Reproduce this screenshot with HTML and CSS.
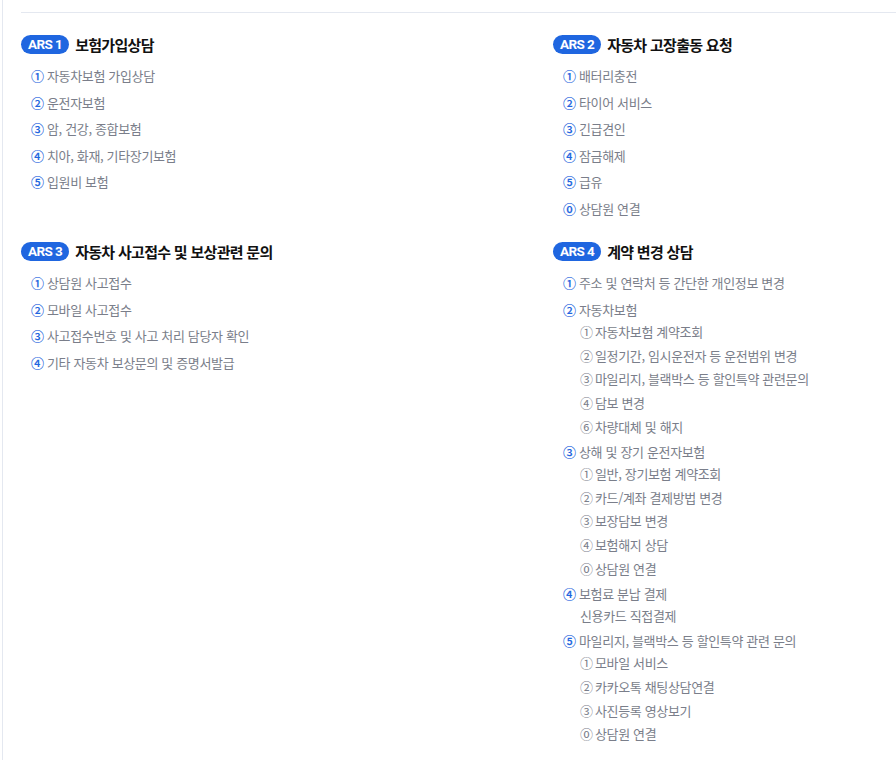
FILE: index.html
```html
<!DOCTYPE html>
<html lang="ko">
<head>
<meta charset="utf-8">
<title>ARS</title>
<link rel="stylesheet" href="styles.css">
</head>
<body>
<main class="page">
  <div class="grid">
    <section class="block">
      <h3 class="title"><span class="badge">ARS 1</span>보험가입상담</h3>
      <ul class="list">
        <li class="item"><span class="num">①</span>자동차보험 가입상담</li>
        <li class="item"><span class="num">②</span>운전자보험</li>
        <li class="item"><span class="num">③</span>암, 건강, 종합보험</li>
        <li class="item"><span class="num">④</span>치아, 화재, 기타장기보험</li>
        <li class="item"><span class="num">⑤</span>입원비 보험</li>
      </ul>
    </section>
    <section class="block">
      <h3 class="title"><span class="badge">ARS 2</span>자동차 고장출동 요청</h3>
      <ul class="list">
        <li class="item"><span class="num">①</span>배터리충전</li>
        <li class="item"><span class="num">②</span>타이어 서비스</li>
        <li class="item"><span class="num">③</span>긴급견인</li>
        <li class="item"><span class="num">④</span>잠금해제</li>
        <li class="item"><span class="num">⑤</span>급유</li>
        <li class="item"><span class="num">⓪</span>상담원 연결</li>
      </ul>
    </section>
    <section class="block">
      <h3 class="title"><span class="badge">ARS 3</span>자동차 사고접수 및 보상관련 문의</h3>
      <ul class="list">
        <li class="item"><span class="num">①</span>상담원 사고접수</li>
        <li class="item"><span class="num">②</span>모바일 사고접수</li>
        <li class="item"><span class="num">③</span>사고접수번호 및 사고 처리 담당자 확인</li>
        <li class="item"><span class="num">④</span>기타 자동차 보상문의 및 증명서발급</li>
      </ul>
    </section>
    <section class="block">
      <h3 class="title"><span class="badge">ARS 4</span>계약 변경 상담</h3>
      <ul class="list">
        <li class="item"><span class="num">①</span>주소 및 연락처 등 간단한 개인정보 변경</li>
        <li class="item"><span class="num">②</span>자동차보험
          <ul class="sub">
            <li class="sub-item"><span class="sub-num">①</span>자동차보험 계약조회</li>
            <li class="sub-item"><span class="sub-num">②</span>일정기간, 임시운전자 등 운전범위 변경</li>
            <li class="sub-item"><span class="sub-num">③</span>마일리지, 블랙박스 등 할인특약 관련문의</li>
            <li class="sub-item"><span class="sub-num">④</span>담보 변경</li>
            <li class="sub-item"><span class="sub-num">⑥</span>차량대체 및 해지</li>
          </ul>
        </li>
        <li class="item"><span class="num">③</span>상해 및 장기 운전자보험
          <ul class="sub">
            <li class="sub-item"><span class="sub-num">①</span>일반, 장기보험 계약조회</li>
            <li class="sub-item"><span class="sub-num">②</span>카드/계좌 결제방법 변경</li>
            <li class="sub-item"><span class="sub-num">③</span>보장담보 변경</li>
            <li class="sub-item"><span class="sub-num">④</span>보험해지 상담</li>
            <li class="sub-item"><span class="sub-num">⓪</span>상담원 연결</li>
          </ul>
        </li>
        <li class="item"><span class="num">④</span>보험료 분납 결제
          <ul class="sub">
            <li class="sub-item">신용카드 직접결제</li>
          </ul>
        </li>
        <li class="item"><span class="num">⑤</span>마일리지, 블랙박스 등 할인특약 관련 문의
          <ul class="sub">
            <li class="sub-item"><span class="sub-num">①</span>모바일 서비스</li>
            <li class="sub-item"><span class="sub-num">②</span>카카오톡 채팅상담연결</li>
            <li class="sub-item"><span class="sub-num">③</span>사진등록 영상보기</li>
            <li class="sub-item"><span class="sub-num">⓪</span>상담원 연결</li>
          </ul>
        </li>
      </ul>
    </section>
  </div>
</main>
</body>
</html>
```
FILE: styles.css
```css
html, body {
  margin: 0;
  padding: 0;
  background: #fff;
}
body {
  height: 760px;
  overflow: hidden;
  font-family: "Noto Sans CJK KR", "Noto Sans", sans-serif;
}
.page {
  margin-left: 2px;
  border-left: 1px solid #e4e8f0;
  padding: 12px 0 0 18px;
  height: 748px;
}
.grid {
  border-top: 1px solid #e4e8f0;
  padding-top: 21px;
  display: grid;
  grid-template-columns: 532px 1fr;
  grid-template-rows: 207px auto;
}
.title {
  margin: 0;
  display: flex;
  align-items: center;
  gap: 6px;
  height: 20px;
  font-size: 15px;
  font-weight: 700;
  letter-spacing: -0.7px;
  color: #111;
}
.badge {
  background: #1f66e0;
  color: #fff;
  border-radius: 10px;
  height: 19px;
  line-height: 18px;
  padding: 0 7px;
  font-family: Roboto, sans-serif;
  font-size: 13.5px;
  font-weight: 700;
  letter-spacing: -0.6px;
}
.list {
  list-style: none;
  margin: 9px 0 0;
  padding: 0 0 0 10px;
}
.item {
  font-size: 13px;
  line-height: 26.5px;
  letter-spacing: -0.35px;
  color: #7a7e8a;
}
.num {
  color: #1f66e0;
  display: inline-block;
  width: 16px;
  font-weight: 500;
  -webkit-text-stroke: 0.15px #1f66e0;
}
.sub {
  list-style: none;
  margin: -3.2px 0 0;
  padding: 0 0 0 17px;
}
.sub-item {
  line-height: 23.75px;
}
.sub-num {
  display: inline-block;
  width: 15px;
}
```
